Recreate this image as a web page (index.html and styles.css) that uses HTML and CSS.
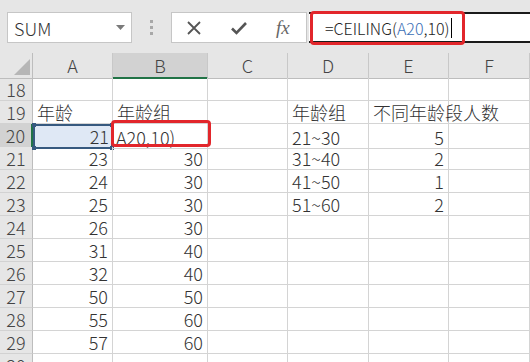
FILE: index.html
```html
<!DOCTYPE html>
<html lang="zh-CN">
<head>
    <meta charset="UTF-8">
    <meta name="viewport" content="width=device-width, initial-scale=1.0">
    <title>CEILING</title>
    <link rel="stylesheet" href="styles.css">
</head>
<body>
    <div class="topbar">
        <div class="name-box">
            <span>SUM</span>
            <svg class="drop" width="9" height="5" viewBox="0 0 9 5"><path d="M0 0h9L4.5 5z" fill="#7a7a7a"/></svg>
        </div>
        <div class="grip"><i></i><i></i><i></i></div>
        <div class="fx-box">
            <svg width="16" height="16" viewBox="0 0 16 16"><path d="M2 2l12 12M14 2L2 14" stroke="#555" stroke-width="1.8" fill="none"/></svg>
            <svg width="18" height="16" viewBox="0 0 18 16"><path d="M2 8.5l4.5 4.5L16 3" stroke="#555" stroke-width="2.6" fill="none"/></svg>
            <span class="fx">fx</span>
        </div>
        <div class="formula-input">
            <span class="mark"></span>
            <span class="formula">=CEILING(<span class="ref">A20</span>,10)</span><span class="caret"></span>
        </div>
    </div>

    <div class="sheet">
        <div class="row head">
            <div class="rh corner"><span class="tri"></span></div>
            <div class="ch">A</div>
            <div class="ch active">B</div>
            <div class="ch">C</div>
            <div class="ch">D</div>
            <div class="ch">E</div>
            <div class="ch">F</div>
        </div>
        <div class="row">
            <div class="rh">18</div>
            <div class="c"></div><div class="c"></div><div class="c"></div><div class="c"></div><div class="c"></div><div class="c"></div>
        </div>
        <div class="row">
            <div class="rh">19</div>
            <div class="c">年龄</div><div class="c">年龄组</div><div class="c"></div><div class="c">年龄组</div><div class="c">不同年龄段人数</div><div class="c"></div>
        </div>
        <div class="row">
            <div class="rh active">20</div>
            <div class="c num ref-cell">21<i class="h tl"></i><i class="h bl"></i><i class="h tr"></i><i class="h br"></i></div>
            <div class="c edit">A20,10)<span class="mark"></span></div>
            <div class="c"></div><div class="c">21~30</div><div class="c num">5</div><div class="c"></div>
        </div>
        <div class="row">
            <div class="rh">21</div>
            <div class="c num">23</div><div class="c num">30</div><div class="c"></div><div class="c">31~40</div><div class="c num">2</div><div class="c"></div>
        </div>
        <div class="row">
            <div class="rh">22</div>
            <div class="c num">24</div><div class="c num">30</div><div class="c"></div><div class="c">41~50</div><div class="c num">1</div><div class="c"></div>
        </div>
        <div class="row">
            <div class="rh">23</div>
            <div class="c num">25</div><div class="c num">30</div><div class="c"></div><div class="c">51~60</div><div class="c num">2</div><div class="c"></div>
        </div>
        <div class="row">
            <div class="rh">24</div>
            <div class="c num">26</div><div class="c num">30</div><div class="c"></div><div class="c"></div><div class="c"></div><div class="c"></div>
        </div>
        <div class="row">
            <div class="rh">25</div>
            <div class="c num">31</div><div class="c num">40</div><div class="c"></div><div class="c"></div><div class="c"></div><div class="c"></div>
        </div>
        <div class="row">
            <div class="rh">26</div>
            <div class="c num">32</div><div class="c num">40</div><div class="c"></div><div class="c"></div><div class="c"></div><div class="c"></div>
        </div>
        <div class="row">
            <div class="rh">27</div>
            <div class="c num">50</div><div class="c num">50</div><div class="c"></div><div class="c"></div><div class="c"></div><div class="c"></div>
        </div>
        <div class="row">
            <div class="rh">28</div>
            <div class="c num">55</div><div class="c num">60</div><div class="c"></div><div class="c"></div><div class="c"></div><div class="c"></div>
        </div>
        <div class="row">
            <div class="rh">29</div>
            <div class="c num">57</div><div class="c num">60</div><div class="c"></div><div class="c"></div><div class="c"></div><div class="c"></div>
        </div>
        <div class="row">
            <div class="rh">30</div>
            <div class="c"></div><div class="c"></div><div class="c"></div><div class="c"></div><div class="c"></div><div class="c"></div>
        </div>
    </div>
</body>
</html>
```

FILE: styles.css
```css
* {
    box-sizing: border-box;
}
body {
    margin: 0;
    width: 530px;
    height: 362px;
    overflow: hidden;
    background: #fff;
    font-family: "Noto Sans CJK SC", "Noto Sans", sans-serif;
    font-size: 18px;
    font-weight: 300;
    color: #333;
}
.topbar {
    display: flex;
    align-items: flex-start;
    height: 53px;
    padding: 12px 0 0 7px;
    background: #e6e6e6;
}
.name-box {
    display: flex;
    align-items: center;
    justify-content: space-between;
    width: 125px;
    height: 31px;
    padding: 0 6px 0 6px;
    background: #fff;
    border: 1px solid #c6c6c6;
    color: #333;
}
.grip {
    display: flex;
    flex-direction: column;
    align-items: center;
    gap: 3px;
    width: 39px;
    padding-top: 8px;
}
.grip i {
    width: 3px;
    height: 3px;
    background: #a8a8a8;
}
.fx-box {
    display: flex;
    align-items: center;
    width: 136px;
    height: 31px;
    padding-left: 14px;
    background: #fff;
    border: 1px solid #c6c6c6;
}
.fx-box svg {
    margin-right: 28px;
}
.fx {
    font-family: "Liberation Serif", serif;
    font-style: italic;
    font-size: 19px;
    color: #666;
}
.formula-input {
    position: relative;
    flex: 1;
    display: flex;
    align-items: center;
    height: 31px;
    margin-left: 2px;
    padding-left: 16px;
    background: #fff;
    border-top: 2px solid #1a1a1a;
    border-bottom: 2px solid #1a1a1a;
    font-size: 16px;
    color: #222;
}
.formula .ref {
    color: #3b6fb6;
}
.caret {
    width: 1px;
    height: 20px;
    margin-left: 1px;
    background: #000;
}
.mark {
    position: absolute;
    border: 3px solid #e2262b;
    border-radius: 4px;
}
.formula-input .mark {
    left: 1px;
    top: -3px;
    width: 155px;
    height: 34px;
}

.sheet {
    display: flex;
    flex-direction: column;
}
.row {
    display: grid;
    grid-template-columns: 33px 80px 95px 80px 81px 80px 1fr;
    height: 23px;
}
.row.head {
    height: 25px;
    background: #e6e6e6;
}
.rh {
    background: #e6e6e6;
    border-right: 1px solid #bdbdbd;
    border-bottom: 1px solid #d2d2d2;
    color: #444;
    text-align: center;
    line-height: 22px;
}
.rh.active {
    background: #d2d2d2;
    border-right: 2px solid #217346;
}
.corner {
    position: relative;
    border-bottom: 1px solid #bdbdbd;
}
.tri {
    position: absolute;
    right: 2px;
    bottom: 3px;
    width: 0;
    height: 0;
    border-left: 16px solid transparent;
    border-bottom: 16px solid #b6b6b6;
}
.ch {
    border-right: 1px solid #c8c8c8;
    border-bottom: 1px solid #bdbdbd;
    color: #444;
    text-align: center;
    line-height: 24px;
}
.ch.active {
    background: #d2d2d2;
    border-bottom: 2px solid #217346;
}
.c {
    position: relative;
    display: flex;
    align-items: flex-end;
    padding: 0 4px 0 4px;
    border-right: 1px solid #d4d4d4;
    border-bottom: 1px solid #d4d4d4;
    line-height: 21px;
    white-space: nowrap;
}
.c.num {
    justify-content: flex-end;
}
.ref-cell {
    background: #dfe8f5;
    border: 2px solid #36597f;
    padding-right: 2px;
}
.h {
    position: absolute;
    width: 4px;
    height: 4px;
    background: #36597f;
}
.h.tl { left: -3px; top: -3px; }
.h.bl { left: -3px; bottom: -3px; }
.h.tr { right: -3px; top: -3px; }
.h.br { right: -3px; bottom: -3px; }
.edit {
    padding-left: 3px;
}
.edit .mark {
    left: -2px;
    top: -4px;
    width: 100px;
    height: 27px;
}
```
